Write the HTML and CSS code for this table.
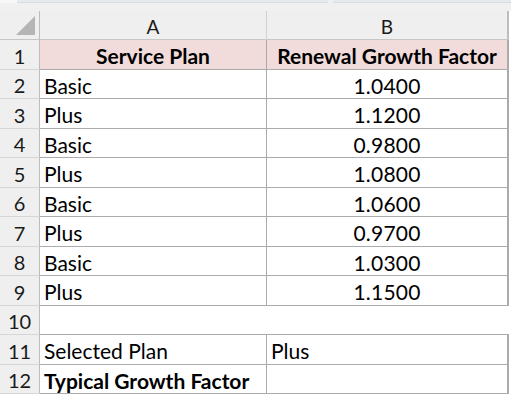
FILE: index.html
```html
<!DOCTYPE html>
<html>
<head>
<meta charset="utf-8">
<link rel="stylesheet" href="styles.css">
</head>
<body>
<div class="topbar">
  <div class="tb-corner"></div>
  <div class="tb-bar tb-left"></div>
  <div class="tb-gap"></div>
  <div class="tb-bar tb-right"></div>
</div>
<div class="sheet">
  <div class="corner"><div class="tri"></div></div>
  <div class="colhead">A</div>
  <div class="colhead last">B</div>

  <div class="rowhead">1</div>
  <div class="cell hdr">Service Plan</div>
  <div class="cell hdr last">Renewal Growth Factor</div>

  <div class="rowhead">2</div>
  <div class="cell">Basic</div>
  <div class="cell num last">1.0400</div>

  <div class="rowhead">3</div>
  <div class="cell">Plus</div>
  <div class="cell num last">1.1200</div>

  <div class="rowhead">4</div>
  <div class="cell">Basic</div>
  <div class="cell num last">0.9800</div>

  <div class="rowhead">5</div>
  <div class="cell">Plus</div>
  <div class="cell num last">1.0800</div>

  <div class="rowhead">6</div>
  <div class="cell">Basic</div>
  <div class="cell num last">1.0600</div>

  <div class="rowhead">7</div>
  <div class="cell">Plus</div>
  <div class="cell num last">0.9700</div>

  <div class="rowhead">8</div>
  <div class="cell">Basic</div>
  <div class="cell num last">1.0300</div>

  <div class="rowhead">9</div>
  <div class="cell">Plus</div>
  <div class="cell num last">1.1500</div>

  <div class="rowhead">10</div>
  <div class="cell blank"></div>
  <div class="cell blank"></div>

  <div class="rowhead">11</div>
  <div class="cell">Selected Plan</div>
  <div class="cell last">Plus</div>

  <div class="rowhead">12</div>
  <div class="cell bold">Typical Growth Factor</div>
  <div class="cell last"></div>
</div>
</body>
</html>
```

FILE: styles.css
```css
* { box-sizing: border-box; }
html, body {
  margin: 0;
  padding: 0;
  background: #ffffff;
}
body {
  width: 511px;
  height: 396px;
  overflow: hidden;
  font-family: "Lato", "Liberation Sans", sans-serif;
  font-size: 21px;
  line-height: 1;
  color: #000;
}
.topbar {
  display: flex;
  height: 11px;
  background: #f0f0f0;
}
.tb-corner {
  width: 17px;
  height: 3px;
  background: #f7f7f7;
}
.tb-bar {
  height: 3px;
  background: #e6eaee;
  border-bottom: 1px solid #dadde0;
}
.tb-left { width: 311px; }
.tb-gap { width: 5px; }
.tb-right { flex: 1; }

.sheet {
  display: grid;
  grid-template-columns: 40px 227px 242px;
  grid-template-rows: 29px 30px 29px 30px 29px 30px 29px 30px 29px 30px 29px 30px 29px;
}
.corner {
  position: relative;
  background: #efefef;
  border-right: 1px solid #bdbdbd;
  border-bottom: 1px solid #c6c6c6;
}
.tri {
  position: absolute;
  right: 4px;
  bottom: 4px;
  width: 0;
  height: 0;
  border-style: solid;
  border-width: 0 0 19px 19px;
  border-color: transparent transparent #b5b5b5 transparent;
}
.colhead {
  background: #efefef;
  border-right: 1px solid #d2d2d2;
  border-bottom: 1px solid #c6c6c6;
  display: flex;
  align-items: center;
  justify-content: center;
  color: #1a1a1a;
  font-size: 19px;
  padding-top: 3px;
}
.colhead.last {
  border-right: 2px solid #bdbdbd;
}
.rowhead {
  background: #efefef;
  border-right: 1px solid #bdbdbd;
  border-bottom: 1px solid #d6d6d6;
  display: flex;
  align-items: center;
  justify-content: center;
  color: #1a1a1a;
  font-size: 20px;
  padding-top: 2px;
}
.cell {
  border-right: 1px solid #ababab;
  border-bottom: 1px solid #ababab;
  display: flex;
  align-items: center;
  padding: 2px 0 0 4px;
  white-space: nowrap;
  overflow: hidden;
}
.cell.last {
  border-right: 2px solid #ababab;
}
.cell.hdr {
  background: #f2dcdb;
  font-weight: 700;
  justify-content: center;
  padding-left: 0;
}
.cell.num {
  justify-content: center;
  padding-left: 0;
  letter-spacing: 0.2px;
}
.cell.bold {
  font-weight: 700;
}
.cell.blank {
  border-right: none;
}
```
